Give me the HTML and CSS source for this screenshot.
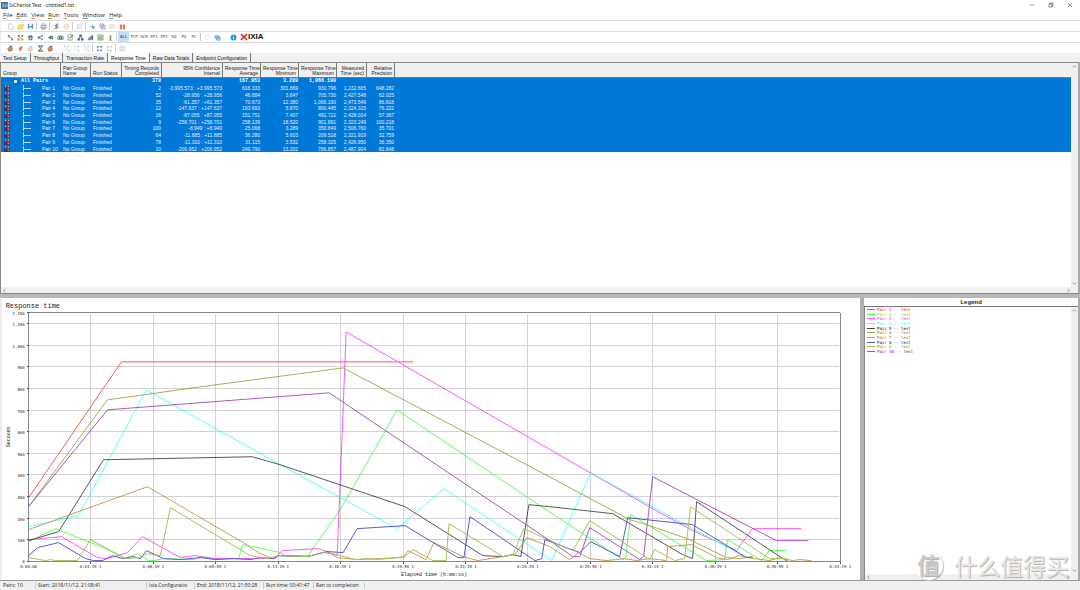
FILE: index.html
```
<!DOCTYPE html>
<html lang="en">
<head>
<meta charset="utf-8">
<title>IxChariot Test - untitled1.tst</title>
<link rel="stylesheet" href="styles.css">
</head>
<body>
<svg class="sprite" aria-hidden="true">
  <symbol id="i-new" viewBox="0 0 8 8"><path d="M2 1h3l2 2v4H2z" fill="#fff" stroke="#9db4cf" stroke-width=".7"/></symbol>
  <symbol id="i-open" viewBox="0 0 8 8"><path d="M1 3l2-1h2l2-1v4L6 7H1z" fill="#f8dc78" stroke="#dfb948" stroke-width=".6"/></symbol>
  <symbol id="i-save" viewBox="0 0 8 8"><path d="M1 1h6v6H1z" fill="#5f96c8"/><path d="M2.500 1h3v2.500h-3zM2.500 5h3v2h-3z" fill="#fff"/></symbol>
  <symbol id="i-print" viewBox="0 0 8 8"><path d="M2 1h4v2H2zM1 3h6v3H1zM2 5h4v2H2z" fill="#f4f6f8" stroke="#7f93a5" stroke-width=".7"/></symbol>
  <symbol id="i-run" viewBox="0 0 8 8"><circle cx="5" cy="1.500" r=".9" fill="#444"/><path d="M2 3l2-.5 1 2 1.500.3M4 3L3.500 5 1.500 7M3.500 5l1.500 2" fill="none" stroke="#444" stroke-width=".9"/></symbol>
  <symbol id="i-stop" viewBox="0 0 8 8"><circle cx="4" cy="4" r="2.700" fill="#fff" stroke="#f6b9a8"/><path d="M2.500 4h3" stroke="#f6b9a8"/></symbol>
  <symbol id="i-check" viewBox="0 0 8 8"><path d="M1.500 1.500h5v5h-5z" fill="#f3f9fd" stroke="#b4d4e9" stroke-width=".7"/><path d="M2.500 4l1 1 2-2.500" fill="none" stroke="#a8c8e0" stroke-width=".7"/></symbol>
  <symbol id="i-cut" viewBox="0 0 8 8"><path d="M1 4h6M4 1.500v4" stroke="#8faed0"/><circle cx="5" cy="5.500" r="1.200" fill="#5588bd"/></symbol>
  <symbol id="i-copy" viewBox="0 0 8 8"><path d="M1 1h4v4H1zM3 2.500h4V7H3z" fill="#e6e8fb" stroke="#8288c9" stroke-width=".7"/></symbol>
  <symbol id="i-paste" viewBox="0 0 8 8"><path d="M1 2h5v4H1z" fill="#fbefe0" stroke="#ecd0ad" stroke-width=".7"/><path d="M4 4h3v3H4z" fill="#fff" stroke="#d9dce0" stroke-width=".7"/></symbol>
  <symbol id="i-del" viewBox="0 0 8 8"><path d="M1 2h2.500v5H1zM4.500 2H7v5H4.500z" fill="#ef6b50"/><path d="M1 1l6 5M7 1L1 6" stroke="#f3a08c" stroke-width=".7"/></symbol>
  <symbol id="i-pair" viewBox="0 0 8 8"><path d="M1 1h2v2H1zM5 5h2v2H5z" fill="#506f9c"/><path d="M2 3c0 2 4 0 4 2" fill="none" stroke="#7e6ba0" stroke-width=".9"/></symbol>
  <symbol id="i-multi" viewBox="0 0 8 8"><path d="M1 1h2v2H1zM5 1h2v2H5z" fill="#4474ad"/><path d="M1 5h2v2H1zM5 5h2v2H5zM2 3l4 2" fill="#e3a53e" stroke="#e3a53e" stroke-width=".8"/></symbol>
  <symbol id="i-voip" viewBox="0 0 8 8"><path d="M1 3q3-3 6 0v1H1zM2 4h4v3H2z" fill="#477b9d"/><circle cx="4" cy="5" r="1" fill="#fff"/></symbol>
  <symbol id="i-share" viewBox="0 0 8 8"><path d="M6 2L2 4l4 2" fill="none" stroke="#55709b" stroke-width=".8"/><circle cx="6" cy="2" r="1" fill="#5f79a4"/><circle cx="2" cy="4" r="1.200" fill="#305486"/><circle cx="6" cy="6" r="1" fill="#5f79a4"/></symbol>
  <symbol id="i-video" viewBox="0 0 8 8"><path d="M1 4l3-2v4zM4 2h3v4H4z" fill="#477b88"/><path d="M5 3h1v2H5z" fill="#cce3e0"/></symbol>
  <symbol id="i-link" viewBox="0 0 8 8"><path d="M1 3h2v3H1zM5 3h2v3H5zM3 2h2v4H3z" fill="#fff" stroke="#4f6678" stroke-width=".9"/></symbol>
  <symbol id="i-edit" viewBox="0 0 8 8"><path d="M1 1h5v6H1z" fill="#eef9ed" stroke="#60a178" stroke-width=".8"/><path d="M3 5l4-4" stroke="#e0555d" stroke-width="1.200"/></symbol>
  <symbol id="i-tree" viewBox="0 0 8 8"><path d="M3 1h2v2H3zM1 5h2v2H1zM5 5h2v2H5zM4 3L2 5M4 3l2 2" fill="#567680" stroke="#315d69" stroke-width=".7"/></symbol>
  <symbol id="i-bars" viewBox="0 0 8 8"><path d="M1 5l2-2v4H1zM3 3l2-1v5H3z" fill="#83929e"/><path d="M5 2l2-1v5L5 7z" fill="#4a6682"/></symbol>
  <symbol id="i-cal" viewBox="0 0 8 8"><path d="M1 1h6v6H1z" fill="#b5dfb1" stroke="#62a875" stroke-width=".7"/><path d="M2 3l4 3M6 3L2 6" stroke="#d46f45"/></symbol>
  <symbol id="i-sig" viewBox="0 0 8 8"><path d="M2.500 1h3v4h-3z" fill="#e8da63"/><path d="M4 2v5M2 7h4" stroke="#79884d"/></symbol>
  <symbol id="i-hand" viewBox="0 0 8 8"><path d="M1 4l2-2 3 1v3L4 7H2z" fill="#c99a57" stroke="#70624c" stroke-width=".6"/><path d="M3 1.500h3" stroke="#47454a"/></symbol>
  <symbol id="i-handg" viewBox="0 0 8 8"><path d="M2 3l3-1 1 2-2 3H3z" fill="#d27961"/><path d="M4 1l3 2" stroke="#68a46a"/></symbol>
  <symbol id="i-hourglass" viewBox="0 0 8 8"><path d="M1 1h6M1 7h6M2 1l4 6M6 1L2 7" stroke="#4a4f57"/><path d="M4 3l2 3H4z" fill="#c78e46"/></symbol>
  <symbol id="i-grid" viewBox="0 0 8 8"><path d="M1 1h2v2H1zM5 1h2v2H5zM1 5h2v2H1zM5 5h2v2H5z" fill="#687da1"/><path d="M3 2h2M3 6h2M2 3v2" stroke="#a6b7cb" stroke-width=".6"/></symbol>
  <symbol id="i-faint" viewBox="0 0 8 8"><path d="M1 1l6 6M7 1L1 7" stroke="#cfe4ce"/><path d="M1 1h2M5 7h2M5 1h2" stroke="#b9c4dc"/></symbol>
  <symbol id="i-stack" viewBox="0 0 8 8"><path d="M1 2h4v3H1zM3 3h4v4H3z" fill="#b4d4f2" stroke="#4d91cf" stroke-width=".7"/></symbol>
  <symbol id="i-info" viewBox="0 0 8 8"><circle cx="4" cy="4" r="3.300" fill="#238be0"/><path d="M4 1.800v1M4 3.400v2.700" stroke="#fff"/></symbol>
  <symbol id="i-users" viewBox="0 0 8 8"><path d="M0 1h8v7H0z" fill="#1c2f78"/><path d="M1 1h2v2H1zM5 1h2v2H5z" fill="#e3b98a"/><path d="M1 4h1v4H1zM4 3h3v4H4z" fill="#c8342c"/><path d="M6 5h1v2H6z" fill="#e8c34e"/></symbol>
</svg>

<div class="app">
  <header class="titlebar">
    <svg class="appicon" viewBox="0 0 8 8"><path d="M0 0h8v8H0z" fill="#3f75a5"/><path d="M1 2l2 2-2 2M3 2v4M5 2v4M7 2v4" stroke="#c3d8ea" fill="none" stroke-width=".8"/></svg>
    <h1 class="title">IxChariot Test - untitled1.tst</h1>
    <div class="winbtns">
      <button aria-label="Minimize"><svg viewBox="0 0 6 6"><path d="M1 3h4" stroke="#555" stroke-width=".6"/></svg></button>
      <button aria-label="Restore"><svg viewBox="0 0 6 6"><path d="M1 2h3v3H1zM2 2V1h3v3H4" fill="none" stroke="#444" stroke-width=".6"/></svg></button>
      <button aria-label="Close"><svg viewBox="0 0 6 6"><path d="M1 1l4 4M5 1L1 5" stroke="#444" stroke-width=".6"/></svg></button>
    </div>
  </header>
  <nav class="menu">
    <button><u>F</u>ile</button><button><u>E</u>dit</button><button><u>V</u>iew</button><button><u>R</u>un</button><button><u>T</u>ools</button><button><u>W</u>indow</button><button><u>H</u>elp</button>
  </nav>

  <div class="toolbar">
    <button aria-label="New"><svg><use href="#i-new"/></svg></button><button aria-label="Open"><svg><use href="#i-open"/></svg></button><button aria-label="Save"><svg><use href="#i-save"/></svg></button><i class="sep"></i>
    <button aria-label="Print"><svg><use href="#i-print"/></svg></button><i class="sep"></i>
    <button aria-label="Run"><svg><use href="#i-run"/></svg></button><button aria-label="Stop"><svg><use href="#i-stop"/></svg></button><i class="sep"></i>
    <button aria-label="Poll"><svg><use href="#i-check"/></svg></button><i class="sep"></i>
    <button aria-label="Cut"><svg><use href="#i-cut"/></svg></button><button aria-label="Copy"><svg><use href="#i-copy"/></svg></button><button aria-label="Paste"><svg><use href="#i-paste"/></svg></button><button aria-label="Delete"><svg><use href="#i-del"/></svg></button>
  </div>
  <div class="toolbar">
    <button aria-label="Add pair"><svg><use href="#i-pair"/></svg></button><button aria-label="Add multicast"><svg><use href="#i-multi"/></svg></button><button aria-label="Add VoIP"><svg><use href="#i-voip"/></svg></button><button aria-label="Add group"><svg><use href="#i-share"/></svg></button><button aria-label="Add video"><svg><use href="#i-video"/></svg></button><button aria-label="Link"><svg><use href="#i-link"/></svg></button><button aria-label="Edit pair"><svg><use href="#i-edit"/></svg></button><button aria-label="Hierarchy"><svg><use href="#i-tree"/></svg></button><button aria-label="Replicate"><svg><use href="#i-bars"/></svg></button><button aria-label="Schedule"><svg><use href="#i-cal"/></svg></button><button aria-label="Signal"><svg><use href="#i-sig"/></svg></button><i class="sep"></i>
    <button class="txt on">ALL</button><button class="txt">TCP</button><button class="txt">SCR</button><button class="txt">EP1</button><button class="txt">EP2</button><button class="txt">SQ</button><button class="txt">PG</button><button class="txt">PC</button><i class="sep"></i>
    <button class="dim" aria-label="Refresh"><svg><use href="#i-check"/></svg></button><button aria-label="Windows"><svg><use href="#i-stack"/></svg></button><i class="gap"></i>
    <button aria-label="About"><svg><use href="#i-info"/></svg></button>
    <span class="brand"><svg viewBox="0 0 8 8"><path d="M1 1l6 6M7 1L1 7" stroke="#d8243b" stroke-width="1.600"/></svg>IXIA</span>
  </div>
  <div class="toolbar">
    <button aria-label="Hold"><svg><use href="#i-hand"/></svg></button><button aria-label="Release"><svg><use href="#i-handg"/></svg></button><button class="dim" aria-label="Grab"><svg><use href="#i-hand"/></svg></button><button aria-label="Timer"><svg><use href="#i-hourglass"/></svg></button><button aria-label="Pick"><svg><use href="#i-hand"/></svg></button><i class="gap"></i>
    <button aria-label="Enable"><svg><use href="#i-faint"/></svg></button><button aria-label="Disable"><svg><use href="#i-faint"/></svg></button><button aria-label="Toggle"><svg><use href="#i-faint"/></svg></button><i class="sep"></i>
    <button aria-label="Expand"><svg><use href="#i-grid"/></svg></button><button class="dim" aria-label="Collapse"><svg><use href="#i-grid"/></svg></button><i class="sep"></i>
    <button class="dim" aria-label="Print view"><svg><use href="#i-print"/></svg></button>
  </div>

  <div class="tabs" role="tablist">
    <button role="tab">Test Setup</button><button role="tab">Throughput</button><button role="tab">Transaction Rate</button><button role="tab" class="active" aria-selected="true">Response Time</button><button role="tab">Raw Data Totals</button><button role="tab">Endpoint Configuration</button>
  </div>

  <main class="work">
    <section class="results">
      <div class="gridwrap">
        <table class="grid">
          <colgroup><col class="c60"><col class="c30"><col class="c31"><col class="c40"><col class="c61"><col class="c38"><col class="c38"><col class="c38"><col class="c30"><col class="c28"><col></colgroup>
          <thead><tr><th>Group</th><th>Pair Group<br>Name</th><th>Run Status</th><th>Timing Records<br>Completed</th><th>95% Confidence<br>Interval</th><th>Response Time<br>Average</th><th>Response Time<br>Minimum</th><th>Response Time<br>Maximum</th><th>Measured<br>Time (sec)</th><th>Relative<br>Precision</th><th></th></tr></thead>
          <tbody>
            <tr class="sum"><td><div class="root"><i class="box"></i>All Pairs</div></td><td></td><td></td><td>378</td><td></td><td>167.953</td><td>3.289</td><td>1,066.190</td><td></td><td></td><td></td></tr>
            <tr><td><div class="pair"><svg><use href="#i-users"/></svg><i></i>Pair 1</div></td><td>No Group</td><td>Finished</td><td>2</td><td>-3,995.573 : +3,995.573</td><td>616.333</td><td>301.869</td><td>930.796</td><td>1,232.665</td><td>648.282</td><td></td></tr>
            <tr><td><div class="pair"><svg><use href="#i-users"/></svg><i></i>Pair 2</div></td><td>No Group</td><td>Finished</td><td>52</td><td>-28.956 : +28.956</td><td>46.684</td><td>3.647</td><td>705.730</td><td>2,427.548</td><td>62.025</td><td></td></tr>
            <tr><td><div class="pair"><svg><use href="#i-users"/></svg><i></i>Pair 3</div></td><td>No Group</td><td>Finished</td><td>35</td><td>-61.357 : +61.357</td><td>70.673</td><td>12.380</td><td>1,066.190</td><td>2,473.549</td><td>86.818</td><td></td></tr>
            <tr><td><div class="pair"><svg><use href="#i-users"/></svg><i></i>Pair 4</div></td><td>No Group</td><td>Finished</td><td>12</td><td>-147.637 : +147.637</td><td>193.693</td><td>5.870</td><td>800.445</td><td>2,324.315</td><td>76.222</td><td></td></tr>
            <tr><td><div class="pair"><svg><use href="#i-users"/></svg><i></i>Pair 5</div></td><td>No Group</td><td>Finished</td><td>16</td><td>-87.055 : +87.055</td><td>151.751</td><td>7.407</td><td>491.722</td><td>2,428.014</td><td>57.367</td><td></td></tr>
            <tr><td><div class="pair"><svg><use href="#i-users"/></svg><i></i>Pair 6</div></td><td>No Group</td><td>Finished</td><td>9</td><td>-258.701 : +258.701</td><td>258.139</td><td>18.520</td><td>901.891</td><td>2,323.249</td><td>100.218</td><td></td></tr>
            <tr><td><div class="pair"><svg><use href="#i-users"/></svg><i></i>Pair 7</div></td><td>No Group</td><td>Finished</td><td>100</td><td>-8.949 : +8.949</td><td>25.068</td><td>3.289</td><td>350.849</td><td>2,506.760</td><td>35.701</td><td></td></tr>
            <tr><td><div class="pair"><svg><use href="#i-users"/></svg><i></i>Pair 8</div></td><td>No Group</td><td>Finished</td><td>64</td><td>-11.885 : +11.885</td><td>36.280</td><td>5.603</td><td>209.518</td><td>2,321.919</td><td>32.759</td><td></td></tr>
            <tr><td><div class="pair"><svg><use href="#i-users"/></svg><i></i>Pair 9</div></td><td>No Group</td><td>Finished</td><td>78</td><td>-11.310 : +11.310</td><td>31.115</td><td>3.532</td><td>258.325</td><td>2,426.950</td><td>36.350</td><td></td></tr>
            <tr><td><div class="pair"><svg><use href="#i-users"/></svg><i></i>Pair 10</div></td><td>No Group</td><td>Finished</td><td>10</td><td>-206.952 : +206.952</td><td>249.790</td><td>13.202</td><td>786.857</td><td>2,487.904</td><td>82.848</td><td></td></tr>
          </tbody>
        </table>
      </div>
      <div class="vscroll"><svg viewBox="0 0 6 6"><path d="M1 4l2-2 2 2"/></svg><svg viewBox="0 0 6 6"><path d="M1 2l2 2 2-2"/></svg></div>
      <div class="hscroll"><svg viewBox="0 0 6 6"><path d="M4 1L2 3l2 2"/></svg><svg viewBox="0 0 6 6"><path d="M2 1l2 2-2 2"/></svg></div>
    </section>

    <div class="lower">
      <section class="chart">
        <svg viewBox="2 298 858 282" role="img" aria-label="Response time by elapsed time">
          <path class="gridline" d="M90 314V561M153 314V561M215 314V561M278 314V561M340 314V561M403 314V561M466 314V561M528 314V561M591 314V561M653 314V561M716 314V561M778 314V561M28 540H840M28 519H840M28 497H840M28 475H840M28 454H840M28 432H840M28 411H840M28 389H840M28 367H840M28 346H840M28 324H840"/>
          <path class="frame" d="M28 313H841V562H28z"/>
          <path class="tick" d="M26 562h2M26 540h2M26 519h2M26 497h2M26 475h2M26 454h2M26 432h2M26 411h2M26 389h2M26 367h2M26 346h2M26 324h2M26 313h2M90 562v2M153 562v2M215 562v2M278 562v2M340 562v2M403 562v2M466 562v2M528 562v2M591 562v2M653 562v2M716 562v2M778 562v2M841 562v2"/>
          <g class="series">
            <polyline stroke="#ff0000" points="28,498 121,362 413,362"/>
            <polyline stroke="#00ff00" points="28,542 55,529 103,548 125,559 137,554 148,561 154,561 163,559 193,560 203,557 215,559 238,559 243,545 280,553 285,556 308,556 340,510 383,435 397,410 449,445 540,506 623,560 626,559 631,515 697,555 707,561 725,560 728,540 762,561 770,551 787,551"/>
            <polyline stroke="#ff00ff" points="28,540 61,537 97,558 107,559 127,553 142,537 180,558 195,556 213,559 240,559 275,559 282,551 318,549 337,556 342,435 346,332 540,444 653,509 693,531 737,551 753,529 802,529"/>
            <polyline stroke="#00ffff" points="28,527 78,516 146,390 280,465 397,529 444,489 540,553 552,561 560,543 591,473 693,529 747,558 753,558"/>
            <polyline stroke="#000000" points="28,541 58,532 103,460 252,457 280,465 405,507 483,556 503,557 513,555 521,557 529,505 550,507 613,514 683,555 693,559 697,502 785,560 788,561"/>
            <polyline stroke="#808000" points="28,507 107,400 200,387 343,368 540,472 630,520 650,526 690,540 727,558 740,559 753,557"/>
            <polyline stroke="#b06800" points="28,530 147,487 243,543 258,553 273,559 278,556 307,557 327,552 337,558 357,560 380,559 403,558 408,551 426,560 434,543 463,557 478,561 503,557 515,555 527,538 550,547 570,560 579,553 590,559 607,561 625,559 637,561 650,559 667,561 668,547 692,545 717,558 728,560 740,556 755,559 770,561 780,558 793,561 800,560 812,561"/>
            <polyline stroke="#0000c0" points="28,556 37,548 58,543 85,559 93,561 102,561 112,556 122,559 133,557 140,559 146,551 163,559 180,560 200,558 215,560 233,559 250,560 260,558 273,559 278,556 307,557 327,552 343,553 357,529 405,526 458,558 464,558 470,517 535,561 542,559 545,540 580,553 591,542 620,557 628,518 693,525 747,558 753,558"/>
            <polyline stroke="#80a000" points="28,558 45,561 50,560 55,561 77,561 90,540 125,559 138,558 147,554 160,556 170,508 250,556 267,559 278,556 307,557 323,553 337,555 355,560 365,559 378,560 405,557 413,550 433,561 446,561 449,524 503,557 513,555 524,529 550,541 573,551 590,521 650,560 655,550 675,561 685,559 691,507 770,559 787,559"/>
            <polyline stroke="#8000a8" points="28,507 107,410 329,393 550,541 573,557 580,557 590,528 640,560 644,557 653,477 777,541 809,541"/>
          </g>
          <text class="ctitle" x="5" y="308">Response time</text>
          <g class="ylab"><text x="24" y="315">1,150</text><text x="24" y="326">1,100</text><text x="24" y="348">1,000</text><text x="24" y="369">900</text><text x="24" y="391">800</text><text x="24" y="413">700</text><text x="24" y="434">600</text><text x="24" y="456">500</text><text x="24" y="477">400</text><text x="24" y="499">300</text><text x="24" y="521">200</text><text x="24" y="542">100</text><text x="24" y="563">0</text></g>
          <g class="xlab"><text x="28" y="568">0:00:00</text><text x="90" y="568">0:03:19 1</text><text x="153" y="568">0:06:39 1</text><text x="215" y="568">0:09:59 1</text><text x="278" y="568">0:13:19 1</text><text x="340" y="568">0:16:39 1</text><text x="403" y="568">0:19:59 1</text><text x="466" y="568">0:23:19 1</text><text x="528" y="568">0:26:39 1</text><text x="591" y="568">0:29:59 1</text><text x="653" y="568">0:33:19 1</text><text x="716" y="568">0:36:39 1</text><text x="778" y="568">0:39:59 1</text><text x="841" y="568">0:43:19 1</text></g>
          <text class="axis" x="434" y="576">Elapsed time (h:mm:ss)</text>
          <text class="axis" transform="translate(9 437) rotate(-90)">Seconds</text>
        </svg>
      </section>
      <aside class="legend">
        <h2>Legend</h2>
        <div class="legendbody">
          <ul>
            <li class="s1">Pair 1 -- test</li><li class="s2">Pair 2 -- test</li><li class="s3">Pair 3 -- test</li><li class="s4">Pair 4 -- test</li><li class="s5">Pair 5 -- test</li><li class="s6">Pair 6 -- test</li><li class="s7">Pair 7 -- test</li><li class="s8">Pair 8 -- test</li><li class="s9">Pair 9 -- test</li><li class="s10">Pair 10 -- test</li>
          </ul>
          <div class="vscroll"><svg viewBox="0 0 6 6"><path d="M1 4l2-2 2 2"/></svg><svg viewBox="0 0 6 6"><path d="M1 2l2 2 2-2"/></svg></div>
          <div class="hscroll"><svg viewBox="0 0 6 6"><path d="M4 1L2 3l2 2"/></svg><svg viewBox="0 0 6 6"><path d="M2 1l2 2-2 2"/></svg></div>
        </div>
      </aside>
    </div>
  </main>

  <footer class="status">
    <span class="w35">Pairs: 10</span><span class="w111">Start: 2018/11/12, 21:08:41</span><span class="w48">Ixia Configuratio</span><span class="w69">End: 2018/11/12, 21:50:28</span><span class="w50">Run time: 00:41:47</span><span class="w51">Ran to completion</span>
  </footer>
</div>
<div class="mark"><b>值</b><span>什么值得买</span></div>
</body>
</html>
```
FILE: styles.css
```
* { box-sizing: border-box; }
html, body { margin: 0; height: 100%; }
body { background: #fff; color: #222; font: 5px/6px "Open Sans", "Noto Sans", sans-serif; overflow: hidden; }
button { border: 0; margin: 0; padding: 0; background: none; font: inherit; color: inherit; }
.sprite { display: none; }
.app { height: 100vh; display: flex; flex-direction: column; }

.titlebar { height: 10px; display: flex; align-items: center; padding-left: 1px; flex: none; }
.appicon { width: 7px; height: 7px; }
.title { margin: 0 0 0 1px; font-family: "Noto Sans", sans-serif; font-size: 5px; font-weight: 400; flex: 1; }
.winbtns { display: flex; padding-right: 1px; }
.winbtns button { width: 19px; height: 9px; display: flex; align-items: center; justify-content: center; }
.winbtns svg { width: 6px; height: 6px; }

.menu { height: 10px; display: flex; align-items: center; gap: 4px; padding-left: 3px; font-size: 6px; flex: none; }
.menu u { text-decoration-thickness: 1px; text-decoration-color: #999; }

.toolbar { height: 11px; flex: none; display: flex; align-items: center; padding-left: 4px; border-top: 1px solid #ddd; border-left: 1px solid #eee; }
.toolbar button { width: 10px; height: 9px; display: flex; align-items: center; justify-content: center; }
.toolbar svg { width: 7px; height: 7px; }
.toolbar .txt { font: 4px/6px "DejaVu Sans Mono", monospace; color: #444; }
.toolbar .on { width: 11px; height: 10px; background: #bfe0f8; color: #111; }
.sep { width: 1px; height: 8px; margin: 0 1px; background: #ccc; flex: none; }
.gap { width: 6px; flex: none; }
.toolbar .dim { opacity: .4; }
.brand { display: flex; align-items: center; padding-left: 2px; font: bold 8px/8px "Liberation Sans", sans-serif; color: #111; }
.brand svg { width: 8px; height: 8px; }

.tabs { height: 9px; flex: none; display: flex; align-items: stretch; background: #f0f0f0; font: 5px/8px "Liberation Sans", sans-serif; }
.tabs button { padding: 1px 3px 0; border-right: 1px solid #777; color: #111; }
.tabs .active { background: #fafafa; }

.work { flex: 1; min-height: 0; display: grid; grid-template-rows: 232fr 286fr; background: #f0f0f0; }
.results { display: grid; grid-template: 1fr 6px / 1fr 7px; border: 1px solid #888; border-right: 2px solid #aaa; background: #fff; min-height: 0; }
.gridwrap { background: #fff; overflow: hidden; }
.grid { width: 100%; height: 89px; table-layout: fixed; border-collapse: separate; border-spacing: 0; font: 5px/6px "Liberation Sans", sans-serif; color: #fff; }
.c28 { width: 28px; } .c30 { width: 30px; } .c31 { width: 31px; } .c38 { width: 38px; } .c40 { width: 40px; } .c60 { width: 60px; } .c61 { width: 61px; }
.grid th { height: 15px; padding: 0 2px 1px; font-weight: 400; line-height: 5px; color: #222; background: #f0f0f0; text-align: left; vertical-align: bottom; white-space: nowrap; border-right: 1px solid #777; border-bottom: 1px solid #777; }
.grid th:last-child { border-right: 0; }
.grid td { padding: 0 1px 0 2px; white-space: nowrap; background: #0078d7; color: #e4f1fc; }
.grid th:nth-child(n+4), .grid td:nth-child(n+4) { text-align: right; }
.grid td:first-child { padding: 0; }
.grid .sum td { font: bold 5px/6px "Liberation Mono", monospace; color: #fff; }
.root { display: flex; align-items: center; padding-left: 12px; }
.box { width: 5px; height: 5px; margin-right: 3px; background: #ddd; border: 1px solid #555; }
.pair { display: grid; grid-template-columns: 22px 19px 1fr; align-items: center; }
.pair svg { display: block; width: 6px; height: 6px; margin-left: 3px; }
.pair i { align-self: stretch; width: 8px; border-left: 1px solid #b5d7f4; background: linear-gradient(#b5d7f4, #b5d7f4) 0 3px / 8px 1px no-repeat; }

.vscroll, .hscroll { background: #f0f0f0; display: flex; justify-content: space-between; }
.vscroll { flex-direction: column; align-items: center; padding: 1px 0; }
.hscroll { grid-column: 1 / 3; align-items: center; padding: 0 7px 0 1px; }
.vscroll svg, .hscroll svg { width: 5px; height: 5px; fill: none; stroke: #888; }

.lower { display: grid; grid-template-columns: 860fr 220fr; border-top: 4px solid #b8b8b8; border-bottom: 1px solid #999; min-height: 0; }
.chart { background: #fff; border-left: 2px solid #eee; min-height: 0; overflow: hidden; }
.chart svg { display: block; width: 100%; height: 100%; }
.gridline { stroke: #d2d2d2; fill: none; shape-rendering: crispEdges; }
.frame { stroke: #888; fill: none; shape-rendering: crispEdges; }
.tick { stroke: #555; shape-rendering: crispEdges; }
.series { fill: none; stroke-width: 1px; opacity: .65; }
.chart text { fill: #222; font-family: "Liberation Mono", monospace; }
.chart .ctitle { font-size: 7px; }
.chart .ylab text, .chart .xlab text { font-family: "DejaVu Sans Mono", monospace; font-size: 4px; }
.ylab text { text-anchor: end; }
.xlab text { text-anchor: middle; }
.chart .axis { font-size: 5px; text-anchor: middle; }

.legend { display: flex; flex-direction: column; border-left: 4px solid #b0b0b0; border-right: 2px solid #aaa; background: #fff; min-height: 0; }
.legend h2 { margin: 0; height: 9px; font: bold 6px/9px "Liberation Mono", monospace; text-align: center; border-bottom: 1px solid #777; flex: none; }
.legendbody { flex: 1; min-height: 0; display: grid; grid-template: 1fr 6px / 1fr 7px; border-left: 1px solid #888; }
.legend ul { margin: 0; padding: 0 2px; list-style: none; font: 4px/5px "DejaVu Sans Mono", monospace; height: 46px; display: flex; flex-direction: column; justify-content: space-between; }
.legend li { display: flex; align-items: center; gap: 2px; height: 4px; }
.legend li::before { content: ""; width: 8px; height: 1px; background: currentColor; opacity: .7; }
.s1 { color: #f00; } .s2 { color: #0f0; } .s3 { color: #f0f; } .s4 { color: #0ff; } .s5 { color: #000; }
.s6 { color: #808000; } .s7 { color: #b06800; } .s8 { color: #0000c0; } .s9 { color: #80a000; } .s10 { color: #8000a8; }

.status { height: 9px; flex: none; display: flex; align-items: center; padding-left: 1px; background: #f0f0f0; font-size: 5px; line-height: 7px; }
.status span { padding-left: 2px; border-right: 1px solid #ccc; white-space: nowrap; }
.w35 { width: 35px; } .w48 { width: 48px; } .w50 { width: 50px; } .w51 { width: 51px; } .w69 { width: 69px; } .w111 { width: 111px; }

.mark { position: absolute; right: 11px; bottom: 10px; display: flex; align-items: center; gap: 11px; color: #e8e8e8; font-family: "Noto Sans CJK SC", sans-serif; text-shadow: 1px 1px 1px #aaa; }
.mark b { width: 29px; height: 29px; border-radius: 50%; background: #fff; box-shadow: 1px 1px 1px #bbb; font-size: 23px; line-height: 27px; text-align: center; font-weight: 500; color: #ccc; }
.mark span { font-size: 23px; line-height: 29px; }
```
